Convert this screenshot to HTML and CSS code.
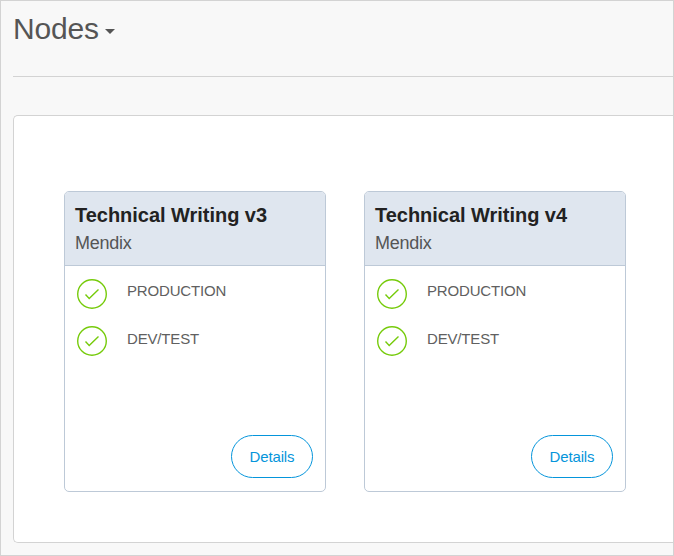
FILE: index.html
```html
<!DOCTYPE html>
<html lang="en">
<head>
<meta charset="utf-8">
<title>Nodes</title>
<link rel="stylesheet" href="styles.css">
</head>
<body>
<div class="page">
  <header class="page-header">
    <h1 class="title">Nodes</h1>
    <svg class="caret" width="10" height="5" viewBox="0 0 10 5"><path d="M0 0h10L5 5z"/></svg>
  </header>
  <main class="panel">
    <section class="card">
      <div class="card-header">
        <h2 class="card-title">Technical Writing v3</h2>
        <p class="company">Mendix</p>
      </div>
      <ul class="environments">
        <li class="environment">
          <svg class="check" width="30" height="30" viewBox="0 0 30 30"><circle cx="15" cy="15" r="14.3"/><path d="M8.5 15.5l3.7 4L21.5 10.5"/></svg>
          <span class="label">PRODUCTION</span>
        </li>
        <li class="environment">
          <svg class="check" width="30" height="30" viewBox="0 0 30 30"><circle cx="15" cy="15" r="14.3"/><path d="M8.5 15.5l3.7 4L21.5 10.5"/></svg>
          <span class="label">DEV/TEST</span>
        </li>
      </ul>
      <button class="details">Details</button>
    </section>
    <section class="card">
      <div class="card-header">
        <h2 class="card-title">Technical Writing v4</h2>
        <p class="company">Mendix</p>
      </div>
      <ul class="environments">
        <li class="environment">
          <svg class="check" width="30" height="30" viewBox="0 0 30 30"><circle cx="15" cy="15" r="14.3"/><path d="M8.5 15.5l3.7 4L21.5 10.5"/></svg>
          <span class="label">PRODUCTION</span>
        </li>
        <li class="environment">
          <svg class="check" width="30" height="30" viewBox="0 0 30 30"><circle cx="15" cy="15" r="14.3"/><path d="M8.5 15.5l3.7 4L21.5 10.5"/></svg>
          <span class="label">DEV/TEST</span>
        </li>
      </ul>
      <button class="details">Details</button>
    </section>
  </main>
</div>
</body>
</html>
```
FILE: styles.css
```css
* {
  box-sizing: border-box;
}

body,
h1,
h2,
p,
ul {
  margin: 0;
  padding: 0;
}

body {
  font-family: "Liberation Sans", Arial, sans-serif;
  color: #555;
}

.page {
  height: 556px;
  padding-left: 12px;
  border: 1px solid #d3d3d3;
  background: #f8f8f8;
  overflow: hidden;
}

.page-header {
  display: flex;
  height: 76px;
  padding-top: 11px;
  border-bottom: 1px solid #d3d3d3;
}

.title {
  font-size: 30px;
  font-weight: 400;
  line-height: 34px;
  letter-spacing: -0.15px;
}

.caret {
  margin: 17px 0 0 6px;
  fill: #555;
}

.panel {
  display: flex;
  gap: 38px;
  height: 428px;
  margin-top: 38px;
  padding: 75px 0 0 50px;
  border: 1px solid #d3d3d3;
  border-right: 0;
  border-radius: 5px 0 0 5px;
  background: #fff;
}

.card {
  display: flex;
  flex-direction: column;
  width: 262px;
  height: 301px;
  border: 1px solid #bdc9d7;
  border-radius: 5px;
  overflow: hidden;
}

.card-header {
  height: 74px;
  padding: 11px 10px 0;
  border-bottom: 1px solid #bdc9d7;
  background: #dfe6ef;
}

.card-title {
  color: #222;
  font-size: 20px;
  line-height: 24px;
  letter-spacing: -0.03px;
}

.company {
  margin-top: 4px;
  font-size: 18px;
  line-height: 24px;
  letter-spacing: -0.25px;
}

.environments {
  display: flex;
  flex-direction: column;
  gap: 17px;
  padding: 13px 12px 0;
  list-style: none;
}

.environment {
  display: flex;
  gap: 20px;
  height: 30px;
}

.check {
  fill: none;
  stroke: #76cb0b;
  stroke-width: 1.4;
}

.label {
  padding-top: 3px;
  color: #606060;
  font-size: 15px;
  line-height: 18px;
  letter-spacing: -0.16px;
}

.environment + .environment .label {
  padding-top: 4px;
}

.details {
  width: 82px;
  height: 43px;
  margin: auto 12px 13px auto;
  padding: 0;
  border: 1px solid #0595db;
  border-radius: 22px;
  background: #fff;
  color: #0595db;
  font: 15px "Liberation Sans", Arial, sans-serif;
  letter-spacing: -0.15px;
}
```
